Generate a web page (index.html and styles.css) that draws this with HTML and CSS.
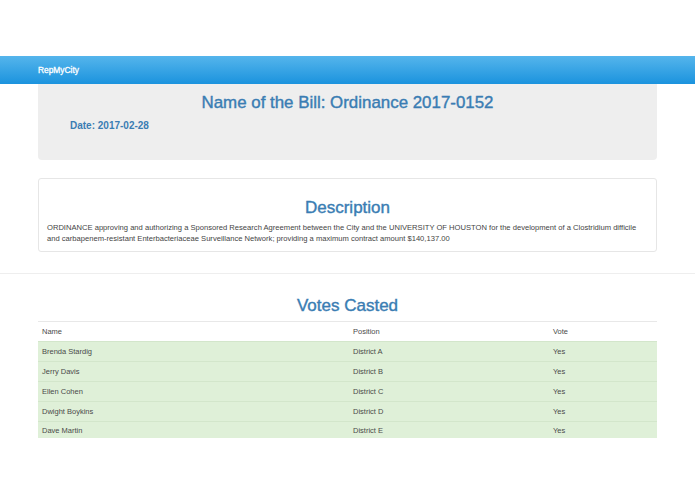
FILE: index.html
```html
<!DOCTYPE html>
<html lang="en">
  <head>
    <meta charset="UTF-8" />
    <title>RepMyCity - Ordinance 2017-0152</title>
    <link rel="stylesheet" href="styles.css">
  </head>
  <body>
    <nav class="navbar">
      <div class="container">
        <a class="brand" href="#">RepMyCity</a>
      </div>
    </nav>

    <div class="container">
      <div class="jumbotron">
        <h1 class="title">Name of the Bill: Ordinance 2017-0152</h1>
        <p class="bill-date">Date: 2017-02-28</p>
      </div>

      <div class="panel">
        <h2 class="section-title">Description</h2>
        <p class="description">
          ORDINANCE approving and authorizing a Sponsored Research Agreement between the City and the UNIVERSITY OF HOUSTON for the development of a Clostridium difficile and carbapenem-resistant Enterbacteriaceae Surveillance Network; providing a maximum contract amount $140,137.00
        </p>
      </div>
    </div>

    <hr class="divider">

    <div class="container">
      <h2 class="section-title votes-title">Votes Casted</h2>
      <table class="votes">
        <thead>
          <tr>
            <th class="col-name">Name</th>
            <th class="col-position">Position</th>
            <th>Vote</th>
          </tr>
        </thead>
        <tbody>
          <tr class="success"><td>Brenda Stardig</td><td>District A</td><td>Yes</td></tr>
          <tr class="success"><td>Jerry Davis</td><td>District B</td><td>Yes</td></tr>
          <tr class="success"><td>Ellen Cohen</td><td>District C</td><td>Yes</td></tr>
          <tr class="success"><td>Dwight Boykins</td><td>District D</td><td>Yes</td></tr>
          <tr class="success"><td>Dave Martin</td><td>District E</td><td>Yes</td></tr>
        </tbody>
      </table>
    </div>
  </body>
</html>
```

FILE: styles.css
```css
body {
  margin: 0;
  font-family: "Liberation Sans", Arial, sans-serif;
  color: #333;
  background: #fff;
}
.container {
  width: 619px;
  margin: 0 auto;
}
.navbar {
  margin-top: 56px;
  height: 28px;
  background: linear-gradient(to bottom, #55b5ec 0%, #1b93de 100%);
}
.brand {
  display: block;
  line-height: 28px;
  font-size: 8.4px;
  -webkit-text-stroke: 0.3px #fff;
  color: #fff;
  text-decoration: none;
}
.jumbotron {
  height: 76px;
  box-sizing: border-box;
  padding: 9px 32px 0;
  background: #eee;
  border-radius: 0 0 4px 4px;
}
.title,
.section-title {
  margin: 0;
  text-align: center;
  font-size: 17px;
  font-weight: normal;
  line-height: 20px;
  color: #3a7db3;
  -webkit-text-stroke: 0.4px #3a7db3;
}
.title {
  font-size: 16.9px;
}
.bill-date {
  margin: 7px 0 0;
  font-size: 10px;
  font-weight: bold;
  color: #3a7db3;
}
.panel {
  margin-top: 18px;
  height: 74px;
  box-sizing: border-box;
  padding: 19px 8px 0;
  border: 1px solid #e6e6e6;
  border-radius: 3px;
}
.description {
  margin: 4px 0 0;
  font-size: 7.6px;
  line-height: 11px;
  color: #444;
}
.divider {
  margin: 21px 0 0;
  border: 0;
  border-top: 1px solid #eee;
}
.votes-title {
  margin-top: 22px;
  margin-bottom: 5px;
}
.votes {
  width: 100%;
  border-collapse: collapse;
  font-size: 7.5px;
  color: #4a4a4a;
}
.votes th,
.votes td {
  height: 19px;
  padding: 0 4px;
  text-align: left;
  font-weight: normal;
  vertical-align: middle;
  border-top: 1px solid #e8e8e8;
}
.votes .col-name {
  width: 303px;
}
.votes .col-position {
  width: 192px;
}
.votes tr.success td {
  background: #dff0d8;
  border-top-color: #d3e6cb;
}
.votes tr:last-child td {
  height: 16px;
}
```
